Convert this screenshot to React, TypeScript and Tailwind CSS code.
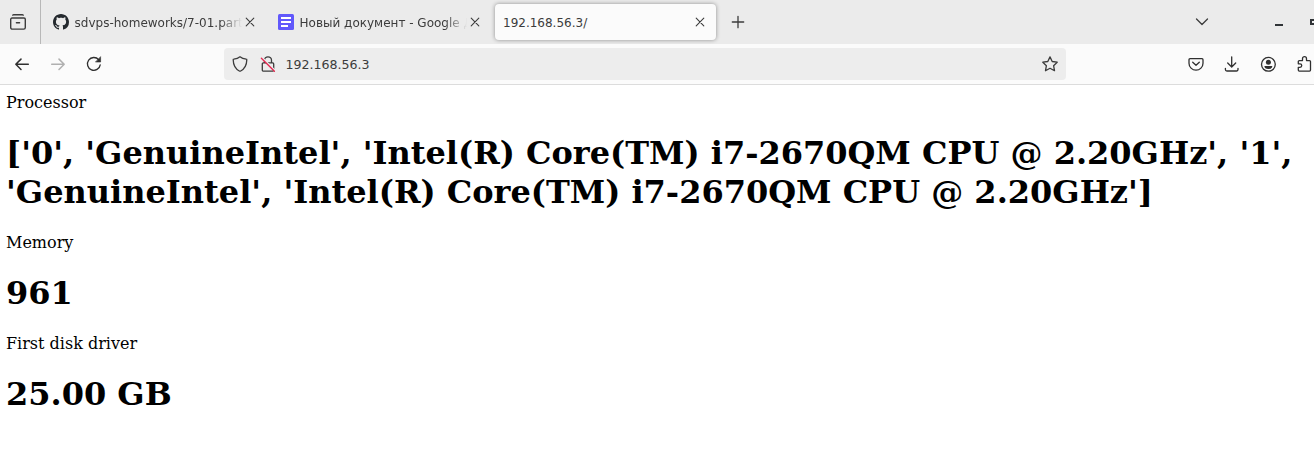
import React from "react";

type IconProps = { className?: string; children: React.ReactNode };

function Icon({ className = "", children }: IconProps) {
  return (
    <svg
      viewBox="0 0 16 16"
      fill="none"
      stroke="currentColor"
      strokeWidth="1.3"
      strokeLinecap="round"
      strokeLinejoin="round"
      className={`size-4 shrink-0 ${className}`}
    >
      {children}
    </svg>
  );
}

function Close() {
  return (
    <Icon className="text-[#3c3c3c]">
      <path d="M4.200 4.200l7.600 7.600M11.800 4.200l-7.600 7.600" strokeWidth="1.1" />
    </Icon>
  );
}

function GithubMark() {
  return (
    <svg viewBox="0 0 16 16" className="size-4 shrink-0 fill-[#24292e]">
      <path d="M8 0C3.58 0 0 3.58 0 8c0 3.54 2.29 6.53 5.47 7.59.4.07.55-.17.55-.38 0-.19-.01-.82-.01-1.49-2.01.37-2.53-.49-2.69-.94-.09-.23-.48-.94-.82-1.13-.28-.15-.68-.52-.01-.53.63-.01 1.08.58 1.23.82.72 1.21 1.87.87 2.33.66.07-.52.28-.87.51-1.07-1.78-.2-3.64-.89-3.64-3.95 0-.87.31-1.59.82-2.15-.08-.2-.36-1.02.08-2.12 0 0 .67-.21 2.2.82.64-.18 1.32-.27 2-.27s1.36.09 2 .27c1.53-1.04 2.2-.82 2.2-.82.44 1.1.16 1.92.08 2.12.51.56.82 1.27.82 2.15 0 3.07-1.87 3.75-3.65 3.95.29.25.54.73.54 1.48 0 1.07-.01 1.93-.01 2.2 0 .21.15.46.55.38A8.01 8.01 0 0016 8c0-4.42-3.58-8-8-8z" />
    </svg>
  );
}

function DocIcon() {
  return (
    <svg viewBox="0 0 16 16" className="size-4 shrink-0">
      <rect width="16" height="16" rx="1.5" fill="#6158fb" />
      <path d="M3 4h10M3 8h10M3 12h7" stroke="#fff" strokeWidth="2" />
    </svg>
  );
}

function Tab({ icon, title }: { icon: React.ReactNode; title: string }) {
  return (
    <div className="flex h-9 w-[225px] shrink-0 items-center pl-3">
      {icon}
      <span className="ml-[5px] w-[168px] overflow-hidden whitespace-nowrap pt-0.5 pl-[0.6px] [mask-image:linear-gradient(to_left,transparent,black_22px)]">
        {title}
      </span>
      <Close />
    </div>
  );
}

function TabBar() {
  return (
    <div className="flex h-11 items-center overflow-hidden bg-[#ebebeb] text-[12px] text-[#3c3c3c]">
      <div className="flex h-11 w-[41px] shrink-0 items-center border-r border-[#b8b8b8] pl-[10px]">
        <Icon>
          <path d="M2.800 1.200q.3-.5 1-.5h8.400q.7 0 1 .5M2 4h12a1.300 1.300 0 0 1 1.300 1.300v8.200a1.600 1.600 0 0 1-1.600 1.600H2.300A1.600 1.600 0 0 1 .7 13.500V5.300A1.300 1.300 0 0 1 2 4zM6.400 8.700h3.200" strokeWidth="1.4" />
        </Icon>
      </div>
      <Tab icon={<GithubMark />} title="sdvps-homeworks/7-01.part" />
      <Tab icon={<DocIcon />} title="Новый документ - Google Д" />
      <div className="ml-1 flex h-9 w-[221px] shrink-0 items-center rounded-[4px] bg-[#fbfbfb] pr-2 pl-2 shadow-[0_0_4px_rgba(0,0,0,0.4)]">
        <span className="flex-1 pt-0.5">192.168.56.3/</span>
        <Close />
      </div>
      <Icon className="ml-[13.500px]">
        <path d="M8 2.300v11.400M2.300 8h11.400" />
      </Icon>
      <Icon className="ml-[448px]">
        <path d="M2.500 5l5.500 5.500L13.500 5" />
      </Icon>
      <div className="mt-1.5 ml-[65.500px] h-[2px] w-2 shrink-0 bg-[#303437]" />
      <div className="ml-[27px] h-[6px] w-2 shrink-0 border-2 border-[#303437]" />
    </div>
  );
}

function Toolbar() {
  return (
    <div className="flex h-[41px] items-center overflow-hidden border-b border-[#dcdcdc] bg-[#fbfbfb] pl-[14px] text-[#303030]">
      <Icon>
        <path d="M14.3 8.300H1.8M7 3.100L1.8 8.300 7 13.500" strokeWidth="1.5" />
      </Icon>
      <Icon className="ml-5 text-[#b0b0b0]">
        <path d="M1.700 8.300h12.500M9 3.100L14.200 8.300 9 13.500" strokeWidth="1.5" />
      </Icon>
      <Icon className="ml-5">
        <path d="M14.200 8.800A6.400 6.400 0 1 1 12.700 3.700" />
        <path d="M14.600 1v5H9.800z" fill="currentColor" strokeWidth=".6" />
      </Icon>
      <div className="ml-[122px] flex h-8 w-[842px] shrink-0 items-center rounded-[4px] bg-[#ededed] px-2 text-[#3c3c3c]">
        <Icon>
          <path d="M8 .8c1.700 1.400 4 2.100 6.200 2.300.3 0 .6.3.6.7-.1 5-2.200 9.100-6.100 11.200a1.500 1.500 0 0 1-1.400 0C3.400 12.900 1.300 8.800 1.200 3.800c0-.4.3-.7.6-.7C4 2.900 6.300 2.200 8 .8z" />
        </Icon>
        <Icon className="ml-3">
          <path d="M4.500 6.800V4.300a3.500 3.500 0 0 1 7 0v2.500M3.300 6.900h9.400a1 1 0 0 1 1 1v6a1.200 1.200 0 0 1-1.200 1.200h-9a1.200 1.200 0 0 1-1.200-1.200v-6a1 1 0 0 1 1-1z" />
          <path d="M2 1.600l13 13" stroke="#ededed" strokeWidth="2" />
          <path d="M1.400 2.200l13 13" stroke="#e22850" strokeWidth="1.300" />
        </Icon>
        <span className="ml-[9.500px] flex-1 pt-0.5 text-[12.600px]">192.168.56.3</span>
        <Icon>
          <path d="M8 .9l2.200 4.600 5 .700-3.600 3.500.9 5L8 12.300l-4.500 2.400.9-5L.8 6.200l5-.700z" />
        </Icon>
      </div>
      <Icon className="ml-[122px]">
        <path d="M2 2.700h12a1 1 0 0 1 1 1v3.500a7 7 0 0 1-14 0V3.700a1 1 0 0 1 1-1zM4.700 6.200L8 9.300l3.300-3.100" />
      </Icon>
      <Icon className="ml-5">
        <path d="M7.700 .8v10M3.700 7l4 4 4-4M1.400 12.300v1.200a1.500 1.500 0 0 0 1.500 1.500h9.600a1.500 1.500 0 0 0 1.500-1.500v-1.200" />
      </Icon>
      <Icon className="ml-5">
        <circle cx="8.400" cy="8.300" r="6.900" />
        <circle cx="8.400" cy="6.300" r="2.500" fill="currentColor" stroke="none" />
        <path d="M4.400 10.100h8a4 3 0 0 1-8 0z" fill="currentColor" stroke="none" />
      </Icon>
      <Icon className="ml-5">
        <path d="M3.300 4.600h3.200V2.700a2 2 0 0 1 4 0v1.900h3a1 1 0 0 1 1 1v8.500a1 1 0 0 1-1 1H3.300a1 1 0 0 1-1-1v-2.800H4a1.700 1.700 0 0 0 0-3.500H2.300V5.600a1 1 0 0 1 1-1z" />
      </Icon>
    </div>
  );
}

export default function App() {
  return (
    <div className="h-[473px] overflow-hidden bg-white font-['DejaVu_Sans',sans-serif]">
      <TabBar />
      <Toolbar />
      <main className="px-[6px] pt-2 font-['DejaVu_Serif',serif] text-base leading-[19px] text-black [&>h1]:mt-[22px] [&>h1]:mb-[21px] [&>h1]:text-[32px] [&>h1]:leading-[39px] [&>h1]:font-bold">
        <p>Processor</p>
        <h1>
          ['0', 'GenuineIntel', 'Intel(R) Core(TM) i7-2670QM CPU @ 2.20GHz', '1',
          'GenuineIntel', 'Intel(R) Core(TM) i7-2670QM CPU @ 2.20GHz']
        </h1>
        <p>Memory</p>
        <h1>961</h1>
        <p>First disk driver</p>
        <h1>25.00 GB</h1>
      </main>
    </div>
  );
}
